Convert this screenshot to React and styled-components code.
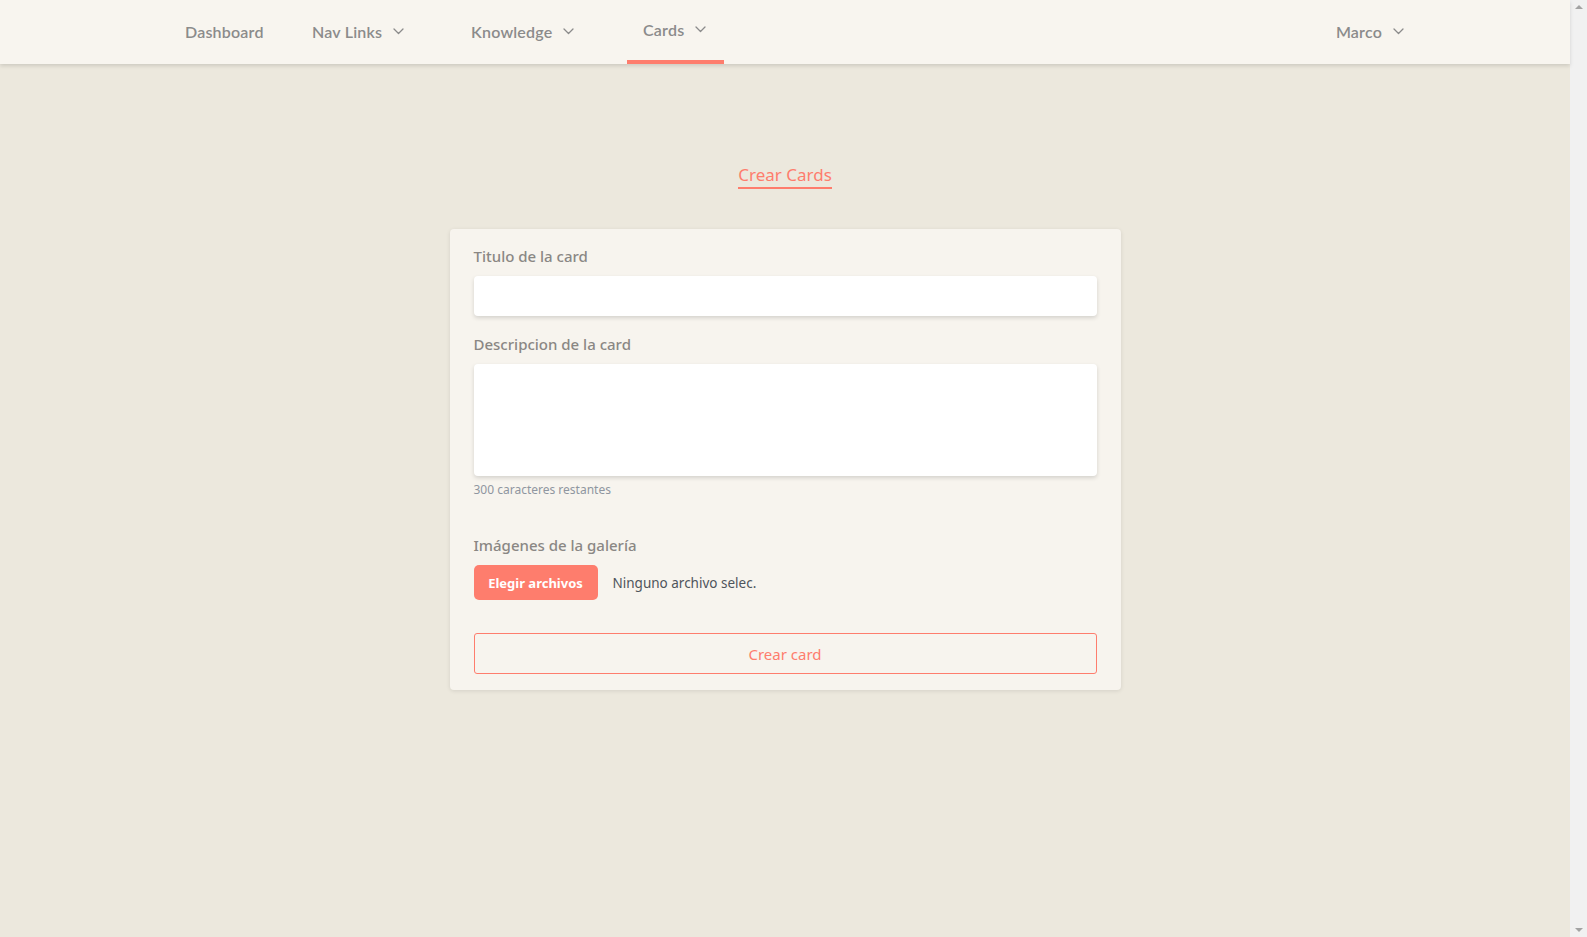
import React from 'react';
import styled, { createGlobalStyle } from 'styled-components';

const GlobalStyle = createGlobalStyle`
  * { box-sizing: border-box; }
  html, body { margin: 0; padding: 0; overflow: hidden; }
  body {
    background: #ece8dd;
    font-family: Lato, "Noto Sans", sans-serif;
  }
`

const Page = styled.div`
  height: 100vh;
  display: flex;
  background: #ece8dd;
`

const Content = styled.div`
  flex: 1;
  min-width: 0;
`

// the browser's (empty) vertical scrollbar on the right edge
const ScrollTrack = styled.div`
  width: 17px;
  flex-shrink: 0;
  background: #f1f1f1;
  display: flex;
  flex-direction: column;
  justify-content: space-between;
  align-items: center;
  padding: 5px 0;
`

const Arrow = styled.span`
  width: 0;
  height: 0;
  border-left: 4px solid transparent;
  border-right: 4px solid transparent;
  ${p => p.$down
    ? 'border-top: 4px solid #a3a3a3;'
    : 'border-bottom: 4px solid #a3a3a3;'}
`

const Nav = styled.nav`
  height: 64px;
  padding: 0 150px 0 169px;
  display: flex;
  align-items: stretch;
  background: #f8f5ef;
  box-shadow: 0 2px 4px rgba(0, 0, 0, 0.13);
  position: relative;
  z-index: 2;
`

const NavItem = styled.div`
  width: ${p => p.$width ? p.$width + 'px' : 'auto'};
  margin-left: ${p => p.$push ? 'auto' : '0'};
  padding: 0 16px 1px;
  display: flex;
  align-items: center;
  gap: 11px;
  font-family: Lato, sans-serif;
  font-size: 16px;
  font-weight: 600;
  color: #8b8b8b;
  letter-spacing: 0.2px;
  border-bottom: ${p => p.$active ? '4px solid #fe7d6d' : '0'};
  cursor: pointer;
`

const Chevron = () => (
  <svg width="11" height="7" viewBox="0 0 11 7" fill="none">
    <path d="M1 1l4.5 4.5L10 1" stroke="#8b8b8b" strokeWidth="1.3" strokeLinecap="round" strokeLinejoin="round" />
  </svg>
)

const Main = styled.main`
  padding-top: 99px;
  display: flex;
  flex-direction: column;
  align-items: center;
`

const Title = styled.h2`
  margin: 0;
  font-family: "Noto Sans", sans-serif;
  font-size: 17px;
  line-height: 24px;
  font-weight: 400;
  color: #fe7d6d;
  border-bottom: 2px solid #fe7d6d;
`

const Card = styled.form`
  width: 671px;
  margin-top: 40px;
  padding: 17px 24px 16px;
  background: #f7f4ee;
  border-radius: 4px;
  box-shadow: 0 1px 4px rgba(0, 0, 0, 0.1);
  display: flex;
  flex-direction: column;
`

const Label = styled.label`
  display: block;
  font-family: "Noto Sans", sans-serif;
  font-size: 15px;
  line-height: 20px;
  font-weight: 500;
  color: #8a8784;
  margin-top: ${p => p.$top || 0}px;
  margin-bottom: 10px;
`

const Input = styled.input`
  width: 100%;
  height: 40px;
  border: 0;
  border-radius: 4px;
  background: #fff;
  box-shadow: 0 2px 4px rgba(0, 0, 0, 0.14);
  outline: none;
  padding: 0 12px;
`

const TextArea = styled.textarea`
  width: 100%;
  height: 112px;
  border: 0;
  border-radius: 4px;
  background: #fff;
  box-shadow: 0 2px 4px rgba(0, 0, 0, 0.14);
  outline: none;
  resize: none;
  padding: 10px 12px;
  display: block;
`

const Helper = styled.small`
  display: block;
  margin-top: 6px;
  font-family: "Noto Sans", sans-serif;
  font-size: 12px;
  line-height: 16px;
  color: #8f96a0;
`

const FileRow = styled.div`
  display: flex;
  align-items: center;
  gap: 15px;
`

const FileButton = styled.button`
  width: 124px;
  height: 35px;
  border: 0;
  border-radius: 5px;
  background: #fe7d6d;
  color: #fff;
  font-family: "Noto Sans", sans-serif;
  font-size: 13px;
  font-weight: 700;
  cursor: pointer;
`

const FileText = styled.span`
  font-family: "Noto Sans", sans-serif;
  font-size: 13.5px;
  color: #4f555c;
`

const Submit = styled.button`
  margin-top: 33px;
  width: 100%;
  height: 41px;
  border: 1px solid #fe7d6d;
  border-radius: 3px;
  background: transparent;
  color: #fe7d6d;
  font-family: "Noto Sans", sans-serif;
  font-size: 15px;
  cursor: pointer;
`

export default function App() {
  return (
    <Page>
      <GlobalStyle />
      <Content>
        <Nav>
          <NavItem $width={127}>Dashboard</NavItem>
          <NavItem $width={159}>Nav Links <Chevron /></NavItem>
          <NavItem $width={172}>Knowledge <Chevron /></NavItem>
          <NavItem $width={97} $active>Cards <Chevron /></NavItem>
          <NavItem $push>Marco <Chevron /></NavItem>
        </Nav>
        <Main>
          <Title>Crear Cards</Title>
          <Card onSubmit={e => e.preventDefault()}>
            <Label>Titulo de la card</Label>
            <Input type="text" />
            <Label $top={18}>Descripcion de la card</Label>
            <TextArea />
            <Helper>300 caracteres restantes</Helper>
            <Label $top={37}>Imágenes de la galería</Label>
            <FileRow>
              <FileButton type="button">Elegir archivos</FileButton>
              <FileText>Ninguno archivo selec.</FileText>
            </FileRow>
            <Submit type="submit">Crear card</Submit>
          </Card>
        </Main>
      </Content>
      <ScrollTrack>
        <Arrow />
        <Arrow $down />
      </ScrollTrack>
    </Page>
  );
}
